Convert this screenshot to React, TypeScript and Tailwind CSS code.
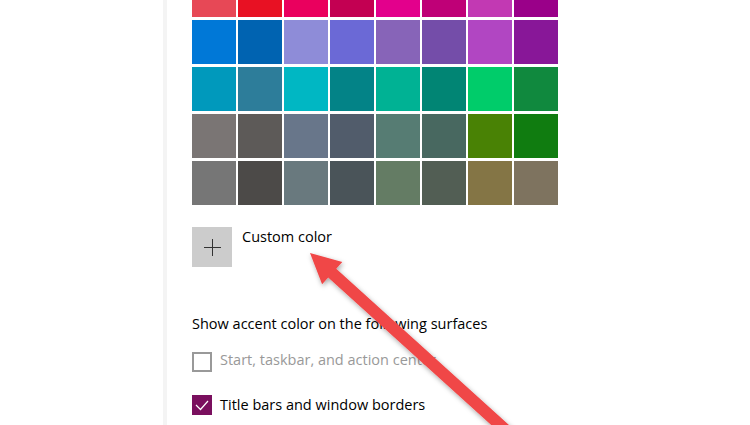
const swatches = [
  ['#e74856', '#e81123', '#ea005e', '#c30052', '#e3008c', '#bf0077', '#c239b3', '#9a0089'],
  ['#0078d7', '#0063b1', '#8e8cd8', '#6b69d6', '#8764b8', '#744da9', '#b146c2', '#881798'],
  ['#0099bc', '#2d7d9a', '#00b7c3', '#038387', '#00b294', '#018574', '#00cc6a', '#10893e'],
  ['#7a7574', '#5d5a58', '#68768a', '#515c6b', '#567c73', '#486860', '#498205', '#107c10'],
  ['#767676', '#4c4a48', '#69797e', '#4a5459', '#647c64', '#525e54', '#847545', '#7e735f'],
]

function Arrow() {
  return (
    <svg className="pointer-events-none absolute inset-0" width="750" height="425" viewBox="0 0 750 425">
      <defs>
        <filter id="shadow" x="-20%" y="-20%" width="140%" height="140%">
          <feDropShadow dx="1" dy="2" stdDeviation="2.5" floodColor="#000" floodOpacity="0.35" />
        </filter>
      </defs>
      <polygon
        points="310,253 342.3,262 336.2,268.7 524,438.6 516,447.4 328.2,277.5 322.1,284.2"
        fill="#f04646"
        filter="url(#shadow)"
      />
    </svg>
  )
}

export default function App() {
  return (
    <div
      className="relative flex h-[425px] w-[750px] overflow-hidden bg-white text-[14.5px] text-black"
      style={{ fontFamily: '"Open Sans", "Noto Sans", sans-serif' }}
    >
      <div className="w-[163px] shrink-0" />
      <div className="w-[4px] shrink-0 bg-[#f4f4f4]" />
      <div className="flex flex-col pl-[25px]">
        <div className="-mt-[27px] grid grid-cols-[repeat(8,44px)] gap-x-[2px] gap-y-[3px]">
          {swatches.flat().map((c, i) => (
            <div key={i} className="h-[44px] w-[44px]" style={{ backgroundColor: c }} />
          ))}
        </div>

        <div className="mt-[22px] flex items-start gap-[10px]">
          <div className="flex h-[40px] w-[40px] items-center justify-center bg-[#cccccc]">
            <svg width="17" height="17" viewBox="0 0 17 17">
              <path d="M8.5 0v17M0 8.5h17" stroke="#333" strokeWidth="1" />
            </svg>
          </div>
          <span className="leading-[20px]">Custom color</span>
        </div>

        <div className="mt-[47px] leading-[20px]">Show accent color on the following surfaces</div>

        <div className="mt-[18px] flex items-center gap-[8px]">
          <div className="h-[20px] w-[20px] border-2 border-[#999]" />
          <span className="-mt-[4px] leading-[20px] text-[#999]">Start, taskbar, and action center</span>
        </div>

        <div className="mt-[23px] flex items-center gap-[8px]">
          <div className="flex h-[20px] w-[20px] items-center justify-center bg-[#7a0f5e]">
            <svg width="20" height="20" viewBox="0 0 20 20">
              <path d="M4 10l4.5 4.5L16 6" fill="none" stroke="#fff" strokeWidth="1.2" />
            </svg>
          </div>
          <span className="-mt-[1px] leading-[20px]">Title bars and window borders</span>
        </div>
      </div>
      <Arrow />
    </div>
  )
}
